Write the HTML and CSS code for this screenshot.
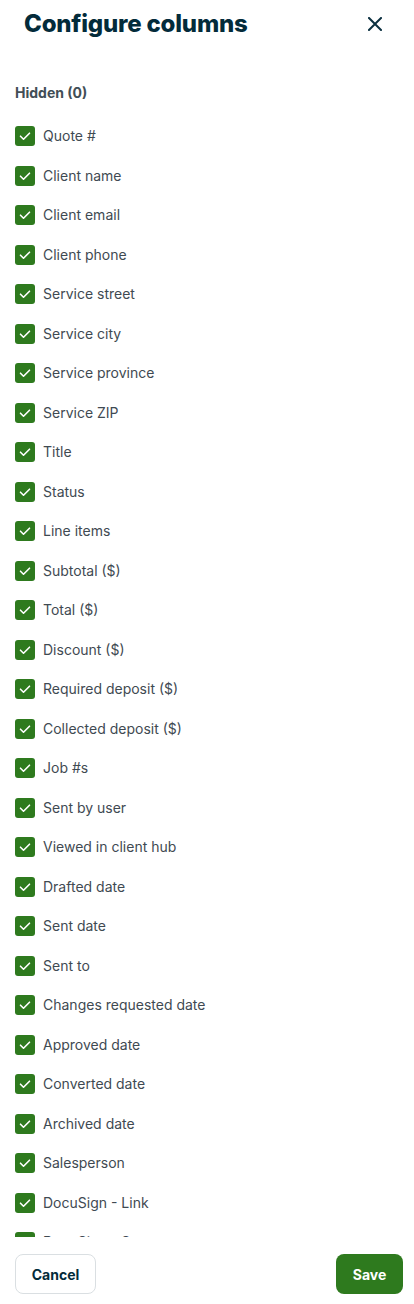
FILE: index.html
```html
<!DOCTYPE html>
<html lang="en">
<head>
<meta charset="utf-8">
<title>Configure columns</title>
<link rel="stylesheet" href="styles.css">
</head>
<body>
<div class="panel">
  <header class="header">
    <h1 class="title">Configure columns</h1>
    <button class="close" aria-label="Close">
      <svg width="14" height="14" viewBox="0 0 14 14"><path d="M1 1L13 13M13 1L1 13" stroke="#0b3040" stroke-width="2" stroke-linecap="square" fill="none"/></svg>
    </button>
  </header>
  <div class="scroll">
    <h2 class="section">Hidden (0)</h2>
    <ul class="list">
      <li class="row"><span class="box"><svg viewBox="0 0 20 20"><path d="M5.5 10.2l3 3 6-6" /></svg></span><span>Quote #</span></li>
      <li class="row"><span class="box"><svg viewBox="0 0 20 20"><path d="M5.5 10.2l3 3 6-6" /></svg></span><span>Client name</span></li>
      <li class="row"><span class="box"><svg viewBox="0 0 20 20"><path d="M5.5 10.2l3 3 6-6" /></svg></span><span>Client email</span></li>
      <li class="row"><span class="box"><svg viewBox="0 0 20 20"><path d="M5.5 10.2l3 3 6-6" /></svg></span><span>Client phone</span></li>
      <li class="row"><span class="box"><svg viewBox="0 0 20 20"><path d="M5.5 10.2l3 3 6-6" /></svg></span><span>Service street</span></li>
      <li class="row"><span class="box"><svg viewBox="0 0 20 20"><path d="M5.5 10.2l3 3 6-6" /></svg></span><span>Service city</span></li>
      <li class="row"><span class="box"><svg viewBox="0 0 20 20"><path d="M5.5 10.2l3 3 6-6" /></svg></span><span>Service province</span></li>
      <li class="row"><span class="box"><svg viewBox="0 0 20 20"><path d="M5.5 10.2l3 3 6-6" /></svg></span><span>Service ZIP</span></li>
      <li class="row"><span class="box"><svg viewBox="0 0 20 20"><path d="M5.5 10.2l3 3 6-6" /></svg></span><span>Title</span></li>
      <li class="row"><span class="box"><svg viewBox="0 0 20 20"><path d="M5.5 10.2l3 3 6-6" /></svg></span><span>Status</span></li>
      <li class="row"><span class="box"><svg viewBox="0 0 20 20"><path d="M5.5 10.2l3 3 6-6" /></svg></span><span>Line items</span></li>
      <li class="row"><span class="box"><svg viewBox="0 0 20 20"><path d="M5.5 10.2l3 3 6-6" /></svg></span><span>Subtotal ($)</span></li>
      <li class="row"><span class="box"><svg viewBox="0 0 20 20"><path d="M5.5 10.2l3 3 6-6" /></svg></span><span>Total ($)</span></li>
      <li class="row"><span class="box"><svg viewBox="0 0 20 20"><path d="M5.5 10.2l3 3 6-6" /></svg></span><span>Discount ($)</span></li>
      <li class="row"><span class="box"><svg viewBox="0 0 20 20"><path d="M5.5 10.2l3 3 6-6" /></svg></span><span>Required deposit ($)</span></li>
      <li class="row"><span class="box"><svg viewBox="0 0 20 20"><path d="M5.5 10.2l3 3 6-6" /></svg></span><span>Collected deposit ($)</span></li>
      <li class="row"><span class="box"><svg viewBox="0 0 20 20"><path d="M5.5 10.2l3 3 6-6" /></svg></span><span>Job #s</span></li>
      <li class="row"><span class="box"><svg viewBox="0 0 20 20"><path d="M5.5 10.2l3 3 6-6" /></svg></span><span>Sent by user</span></li>
      <li class="row"><span class="box"><svg viewBox="0 0 20 20"><path d="M5.5 10.2l3 3 6-6" /></svg></span><span>Viewed in client hub</span></li>
      <li class="row"><span class="box"><svg viewBox="0 0 20 20"><path d="M5.5 10.2l3 3 6-6" /></svg></span><span>Drafted date</span></li>
      <li class="row"><span class="box"><svg viewBox="0 0 20 20"><path d="M5.5 10.2l3 3 6-6" /></svg></span><span>Sent date</span></li>
      <li class="row"><span class="box"><svg viewBox="0 0 20 20"><path d="M5.5 10.2l3 3 6-6" /></svg></span><span>Sent to</span></li>
      <li class="row"><span class="box"><svg viewBox="0 0 20 20"><path d="M5.5 10.2l3 3 6-6" /></svg></span><span>Changes requested date</span></li>
      <li class="row"><span class="box"><svg viewBox="0 0 20 20"><path d="M5.5 10.2l3 3 6-6" /></svg></span><span>Approved date</span></li>
      <li class="row"><span class="box"><svg viewBox="0 0 20 20"><path d="M5.5 10.2l3 3 6-6" /></svg></span><span>Converted date</span></li>
      <li class="row"><span class="box"><svg viewBox="0 0 20 20"><path d="M5.5 10.2l3 3 6-6" /></svg></span><span>Archived date</span></li>
      <li class="row"><span class="box"><svg viewBox="0 0 20 20"><path d="M5.5 10.2l3 3 6-6" /></svg></span><span>Salesperson</span></li>
      <li class="row"><span class="box"><svg viewBox="0 0 20 20"><path d="M5.5 10.2l3 3 6-6" /></svg></span><span>DocuSign - Link</span></li>
      <li class="row"><span class="box"><svg viewBox="0 0 20 20"><path d="M5.5 10.2l3 3 6-6" /></svg></span><span>DocuSign - Status</span></li>
    </ul>
  </div>
  <footer class="footer">
    <button class="btn btn-cancel">Cancel</button>
    <button class="btn btn-save">Save</button>
  </footer>
</div>
</body>
</html>
```

FILE: styles.css
```css
* { box-sizing: border-box; }
html, body { margin: 0; padding: 0; background: #fff; }
body {
  font-family: Inter, "Noto Sans", "Liberation Sans", sans-serif;
  color: #424e56;
}
.panel {
  width: 414px;
  height: 1304px;
  display: flex;
  flex-direction: column;
  padding: 0 11px 0 15px;
}
.header {
  height: 48px;
  display: flex;
  align-items: center;
  justify-content: space-between;
  flex: none;
}
.title {
  margin: 0 0 0 9px;
  font-size: 24px;
  line-height: 30px;
  font-weight: 800;
  color: #032b3a;
  letter-spacing: -0.2px;
}
.close {
  width: 32px;
  height: 32px;
  border: 0;
  background: none;
  padding: 0;
  display: flex;
  align-items: center;
  justify-content: center;
  margin-right: 12px;
}
.scroll {
  height: 1189px;
  overflow: hidden;
  flex: none;
  padding-top: 35px;
}
.section {
  margin: 0 0 21px;
  font-size: 14px;
  line-height: 20px;
  font-weight: 700;
  color: #424e56;
}
.list {
  list-style: none;
  margin: 0;
  padding: 0;
  display: flex;
  flex-direction: column;
  gap: 15.5px;
}
.row {
  height: 24px;
  display: flex;
  align-items: center;
  gap: 8px;
  font-size: 14px;
  line-height: 20px;
  color: #3f4a52;
}
.box {
  width: 20px;
  height: 20px;
  border-radius: 3px;
  background: #2e7a1e;
  flex: none;
  display: flex;
}
.box svg {
  width: 20px;
  height: 20px;
  fill: none;
  stroke: #fff;
  stroke-width: 1.6;
  stroke-linecap: round;
  stroke-linejoin: round;
}
.footer {
  flex: none;
  display: flex;
  justify-content: space-between;
  padding-top: 17px;
}
.btn {
  height: 40px;
  border-radius: 8px;
  font-family: Inter, "Noto Sans", "Liberation Sans", sans-serif;
  font-size: 14px;
  font-weight: 700;
  padding: 0;
}
.btn-cancel {
  width: 81px;
  background: #fff;
  border: 1px solid #dadfe2;
  color: #032b3a;
}
.btn-save {
  width: 67px;
  background: #2e7a1e;
  border: 0;
  color: #fff;
}
```
